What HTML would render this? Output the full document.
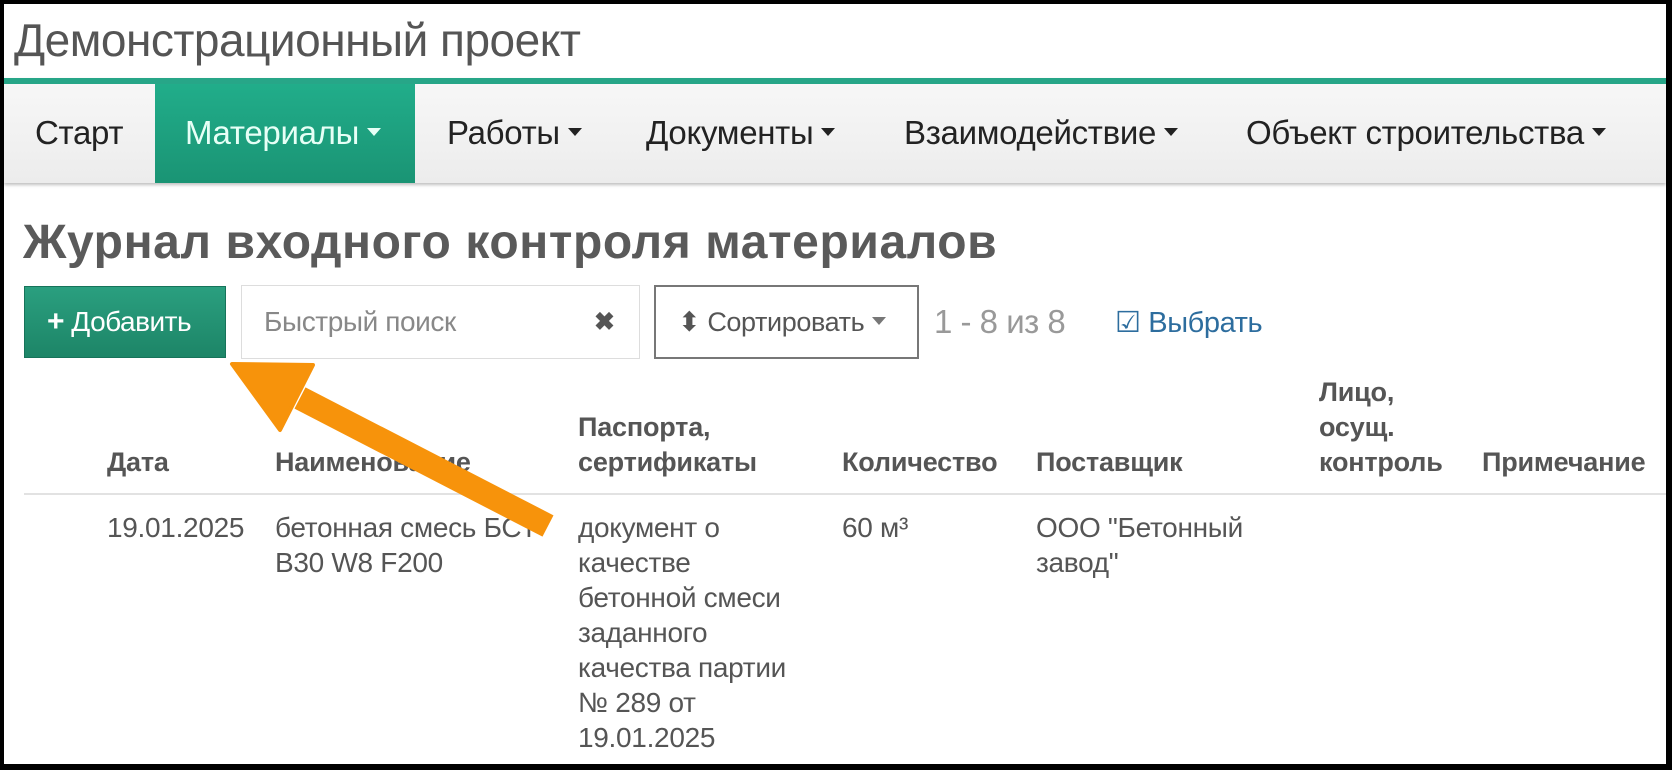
<!DOCTYPE html>
<html><head><meta charset="utf-8"><style>
*{margin:0;padding:0;box-sizing:border-box}
body{width:1672px;height:770px;overflow:hidden;background:#fff;font-family:"Liberation Sans",sans-serif;position:relative}
.a{position:absolute;white-space:nowrap}
.frame{position:absolute;left:0;top:0;width:1672px;height:770px;border:4px solid #000;border-right-width:6px;border-bottom-width:6px;pointer-events:none}
.nav{position:absolute;left:4px;top:78px;width:1662px;height:105px;background:linear-gradient(#f7f7f7,#ececec);border-top:6px solid #27a688;box-shadow:0 2px 3px rgba(0,0,0,.25)}
.nv{font-size:33px;letter-spacing:-0.3px;color:#222;top:114px}
.car{display:inline-block;width:0;height:0;border-left:7px solid transparent;border-right:7px solid transparent;border-top:8px solid currentColor;vertical-align:middle;margin-left:8px;position:relative;top:-3px}
.th{font-weight:bold;color:#555;font-size:27px;line-height:35px;letter-spacing:-0.2px}
.td{color:#555;font-size:28px;line-height:35px;letter-spacing:-0.3px}
</style></head><body>
<div class="a" style="left:14px;top:13px;font-size:46px;letter-spacing:-0.5px;color:#555">Демонстрационный проект</div>
<div class="nav"></div>
<div class="a" style="left:155px;top:84px;width:260px;height:99px;background:linear-gradient(#21ad8a,#1a9474)"></div>
<div class="a nv" style="left:35px">Старт</div>
<div class="a nv" style="left:185px;color:#e6fff6">Материалы<span class="car"></span></div>
<div class="a nv" style="left:447px">Работы<span class="car"></span></div>
<div class="a nv" style="left:646px">Документы<span class="car"></span></div>
<div class="a nv" style="left:904px">Взаимодействие<span class="car"></span></div>
<div class="a nv" style="left:1246px">Объект строительства<span class="car"></span></div>
<div class="a" style="left:23px;top:215px;font-size:48px;font-weight:bold;color:#5a5a5a;letter-spacing:0.6px">Журнал входного контроля материалов</div>
<div class="a" style="left:24px;top:286px;width:202px;height:72px;background:linear-gradient(#2a9f7f,#1d8567);border:1px solid #17735a;color:#fff;font-size:28px;letter-spacing:-0.5px;line-height:70px;padding-left:22px"><b style="font-size:30px">+</b> Добавить</div>
<div class="a" style="left:241px;top:285px;width:399px;height:74px;border:1px solid #ddd;color:#888;font-size:28px;letter-spacing:-0.4px;line-height:72px;padding-left:22px">Быстрый поиск<span style="position:absolute;left:352px;color:#555;font-weight:bold;font-size:25px">✖</span></div>
<div class="a" style="left:654px;top:285px;width:265px;height:74px;border:2px solid #777;color:#555;font-size:27px;letter-spacing:-0.4px;line-height:70px;padding-left:22px">⬍ Сортировать<span class="car" style="color:#777"></span></div>
<div class="a" style="left:934px;top:303px;font-size:33px;color:#999;letter-spacing:-0.5px">1 - 8 из 8</div>
<div class="a" style="left:1115px;top:305px;font-size:29px;color:#2d6d9e;letter-spacing:-0.4px">☑ Выбрать</div>
<div class="a th" style="left:107px;top:445px">Дата</div>
<div class="a th" style="left:275px;top:445px">Наименование</div>
<div class="a th" style="left:578px;top:410px">Паспорта,<br>сертификаты</div>
<div class="a th" style="left:842px;top:445px">Количество</div>
<div class="a th" style="left:1036px;top:445px">Поставщик</div>
<div class="a th" style="left:1319px;top:375px">Лицо,<br>осущ.<br>контроль</div>
<div class="a th" style="left:1482px;top:445px">Примечание</div>
<div class="a" style="left:24px;top:493px;width:1642px;height:2px;background:#e2e2e2"></div>
<div class="a td" style="left:107px;top:510px">19.01.2025</div>
<div class="a td" style="left:275px;top:510px">бетонная смесь БСТ<br>B30 W8 F200</div>
<div class="a td" style="left:578px;top:510px">документ о<br>качестве<br>бетонной смеси<br>заданного<br>качества партии<br>№ 289 от<br>19.01.2025</div>
<div class="a td" style="left:842px;top:510px">60 м³</div>
<div class="a td" style="left:1036px;top:510px">ООО "Бетонный<br>завод"</div>
<svg class="a" style="left:0;top:0" width="1672" height="770"><g fill="#f7930b" stroke="#f7930b" stroke-linejoin="round">
<line x1="300" y1="398" x2="548" y2="526" stroke-width="24"/>
<polygon points="232,364 313,365 280,430" stroke-width="4"/></g></svg>
<div class="frame"></div>
</body></html>
